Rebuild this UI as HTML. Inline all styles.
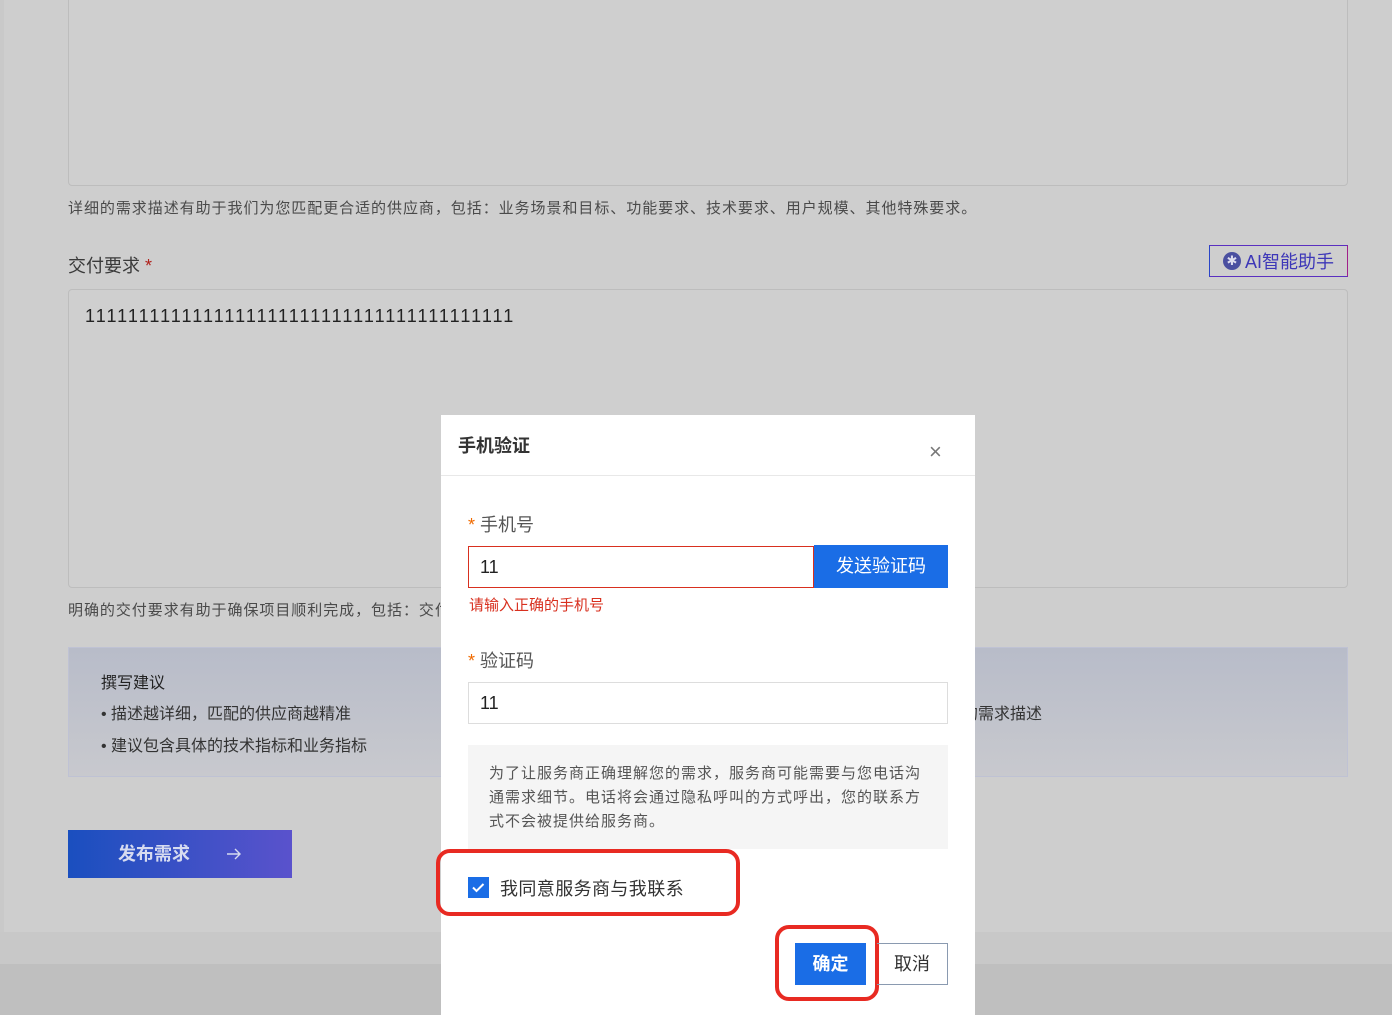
<!DOCTYPE html>
<html><head><meta charset="utf-8"><style>
*{margin:0;padding:0;box-sizing:border-box}
body{width:1392px;height:1010px;overflow:hidden;background:#bfbfbf;font-family:"Liberation Sans","Noto Sans CJK SC",sans-serif;position:relative}
.abs{position:absolute}
.page{left:0;top:0;width:1392px;height:932px;background:#cecece}
.band{left:0;top:932px;width:1392px;height:32px;background:#c8c8c8}
.ta{border:1px solid #bdbdbd;border-radius:4px;background:#cfcfcf}
.hint{font-size:15px;color:#4a4a4a;letter-spacing:0.95px}
.modal{left:441px;top:415px;width:534px;height:600px;background:#fff}
</style></head><body>
<div class="abs page"></div>
<div class="abs" style="left:0;top:0;width:4px;height:932px;background:#c9c9c9"></div>
<div class="abs band"></div>
<div class="abs ta" style="left:68px;top:-10px;width:1280px;height:196px"></div>
<div class="abs hint" style="left:68px;top:197px">详细的需求描述有助于我们为您匹配更合适的供应商，包括：业务场景和目标、功能要求、技术要求、用户规模、其他特殊要求。</div>
<div class="abs" style="left:68px;top:252px;font-size:18px;color:#3a3a3a">交付要求 <span style="color:#b0201a">*</span></div>
<div class="abs" style="left:1209px;top:245px;width:139px;height:32px;border:1px solid #5a2fc0;border-left-color:#2a45c8;border-right-color:#a0208a;display:flex;align-items:center;justify-content:center;font-size:18px;color:#3d37b8">
<span style="display:inline-block;width:18px;height:18px;border-radius:50%;background:#4a4fa0;color:#dde;font-size:13px;line-height:18px;text-align:center;margin-right:4px">✱</span>AI智能助手</div>
<div class="abs ta" style="left:68px;top:289px;width:1280px;height:299px"></div>
<div class="abs" style="left:85px;top:306px;font-size:18px;letter-spacing:2.05px;color:#222">1111111111111111111111111111111111111111</div>
<div class="abs hint" style="left:68px;top:599px">明确的交付要求有助于确保项目顺利完成，包括：交付</div>
<div class="abs" style="left:68px;top:647px;width:1280px;height:130px;background:linear-gradient(#b8bcc9,#c8c9ce);border:1px solid #bfc2d4"></div>
<div class="abs" style="left:101px;top:669px;font-size:16px;color:#222">撰写建议</div>
<div class="abs" style="left:101px;top:700px;font-size:16px;color:#333">• 描述越详细，匹配的供应商越精准</div>
<div class="abs" style="left:101px;top:732px;font-size:16px;color:#333">• 建议包含具体的技术指标和业务指标</div>
<div class="abs" style="left:962px;top:700px;font-size:16px;color:#333">的需求描述</div>
<div class="abs" style="left:68px;top:830px;width:224px;height:48px;background:linear-gradient(90deg,#1a4fbf,#5a52cc);color:#d6dbf0;font-size:18px;font-weight:bold;line-height:48px"><span style="position:absolute;left:50px">发布需求</span>
<svg style="position:absolute;left:158px;top:18px" width="16" height="12" viewBox="0 0 16 12"><path d="M1 6h13M9 1l5 5-5 5" stroke="#d6dbf0" stroke-width="1.4" fill="none"/></svg></div>

<div class="abs modal">
<div class="abs" style="left:17px;top:17px;font-size:18px;font-weight:bold;color:#333">手机验证</div>
<div class="abs" style="left:488px;top:26px;font-size:22px;color:#777;line-height:22px">×</div>
<div class="abs" style="left:0;top:60px;width:534px;height:1px;background:#e8e8e8"></div>
<div class="abs" style="left:27px;top:96px;font-size:18px;color:#555"><span style="color:#f06a00">*</span> 手机号</div>
<div class="abs" style="left:27px;top:131px;width:346px;height:42px;border:1px solid #d8301f;font-size:18px;line-height:40px;padding-left:11px;color:#222">11</div>
<div class="abs" style="left:373px;top:130px;width:134px;height:43px;background:#1a6de6;color:#fff;font-size:18px;line-height:43px;text-align:center">发送验证码</div>
<div class="abs" style="left:28px;top:179px;font-size:15px;color:#d8301f">请输入正确的手机号</div>
<div class="abs" style="left:27px;top:232px;font-size:18px;color:#555"><span style="color:#f06a00">*</span> 验证码</div>
<div class="abs" style="left:27px;top:267px;width:480px;height:42px;border:1px solid #ddd;font-size:18px;line-height:40px;padding-left:11px;color:#222">11</div>
<div class="abs" style="left:27px;top:330px;width:480px;height:104px;background:#f5f5f5;padding:17px 22px 17px 21px;font-size:15px;line-height:24px;color:#555;letter-spacing:1px">为了让服务商正确理解您的需求，服务商可能需要与您电话沟通需求细节。电话将会通过隐私呼叫的方式呼出，您的联系方式不会被提供给服务商。</div>
<div class="abs" style="left:-5px;top:434px;width:304px;height:67px;border:4px solid #e82a22;border-radius:14px"></div>
<div class="abs" style="left:27px;top:462px;width:21px;height:21px;background:#1a6de6">
<svg width="21" height="21" viewBox="0 0 21 21"><path d="M5 10.5l3.5 3.5 7-7" stroke="#fff" stroke-width="2" fill="none"/></svg></div>
<div class="abs" style="left:59px;top:460px;font-size:18px;color:#333;letter-spacing:0.4px">我同意服务商与我联系</div>
<div class="abs" style="left:334px;top:510px;width:104px;height:76px;border:4px solid #e82a22;border-radius:14px"></div>
<div class="abs" style="left:354px;top:528px;width:71px;height:42px;background:#1a6de6;color:#fff;font-size:18px;font-weight:bold;line-height:42px;text-align:center">确定</div>
<div class="abs" style="left:436px;top:528px;width:71px;height:42px;border:1px solid #8a9ab0;border-left:none;color:#333;font-size:18px;line-height:40px;text-align:center">取消</div>
</div>
</body></html>
